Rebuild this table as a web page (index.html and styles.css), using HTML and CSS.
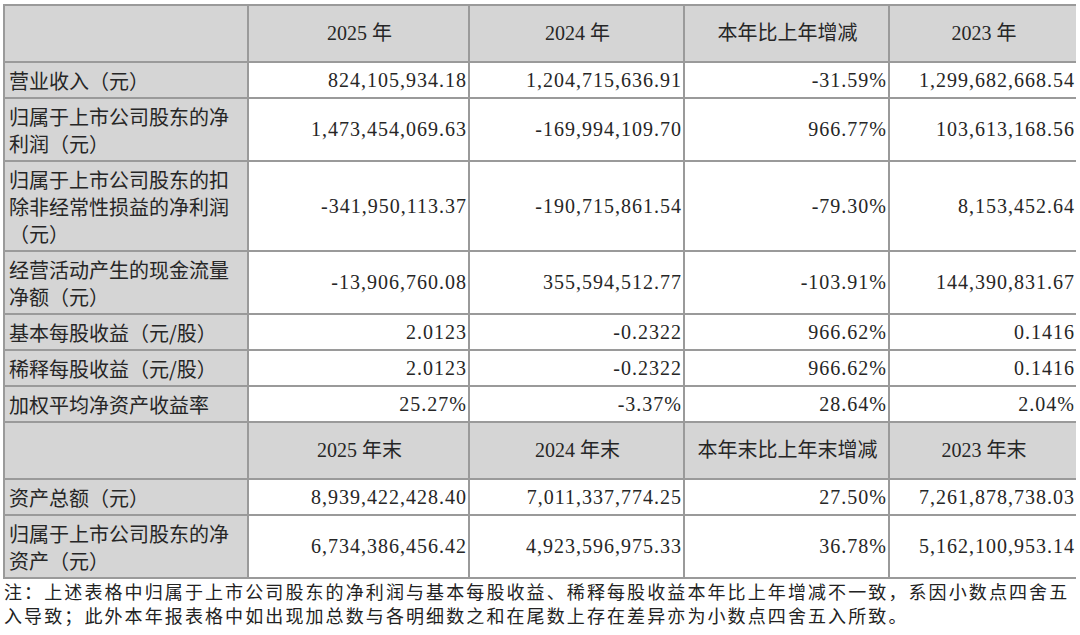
FILE: index.html
```html
<!DOCTYPE html>
<html lang="zh-CN">
<head>
<meta charset="utf-8">
<title>主要会计数据和财务指标</title>
<link rel="stylesheet" href="styles.css">
</head>
<body>
<table class="fin">
  <colgroup>
    <col class="c1"><col class="c2"><col class="c3"><col class="c4"><col class="c5">
  </colgroup>
  <tr class="head">
    <th></th><th>2025 年</th><th>2024 年</th><th>本年比上年增减</th><th>2023 年</th>
  </tr>
  <tr>
    <td class="label">营业收入（元）</td><td>824,105,934.18</td><td>1,204,715,636.91</td><td>-31.59%</td><td>1,299,682,668.54</td>
  </tr>
  <tr>
    <td class="label">归属于上市公司股东的净利润（元）</td><td>1,473,454,069.63</td><td>-169,994,109.70</td><td>966.77%</td><td>103,613,168.56</td>
  </tr>
  <tr>
    <td class="label">归属于上市公司股东的扣除非经常性损益的净利润（元）</td><td>-341,950,113.37</td><td>-190,715,861.54</td><td>-79.30%</td><td>8,153,452.64</td>
  </tr>
  <tr>
    <td class="label">经营活动产生的现金流量净额（元）</td><td>-13,906,760.08</td><td>355,594,512.77</td><td>-103.91%</td><td>144,390,831.67</td>
  </tr>
  <tr>
    <td class="label">基本每股收益（元/股）</td><td>2.0123</td><td>-0.2322</td><td>966.62%</td><td>0.1416</td>
  </tr>
  <tr>
    <td class="label">稀释每股收益（元/股）</td><td>2.0123</td><td>-0.2322</td><td>966.62%</td><td>0.1416</td>
  </tr>
  <tr>
    <td class="label">加权平均净资产收益率</td><td>25.27%</td><td>-3.37%</td><td>28.64%</td><td>2.04%</td>
  </tr>
  <tr class="head">
    <th></th><th>2025 年末</th><th>2024 年末</th><th>本年末比上年末增减</th><th>2023 年末</th>
  </tr>
  <tr>
    <td class="label">资产总额（元）</td><td>8,939,422,428.40</td><td>7,011,337,774.25</td><td>27.50%</td><td>7,261,878,738.03</td>
  </tr>
  <tr>
    <td class="label">归属于上市公司股东的净资产（元）</td><td>6,734,386,456.42</td><td>4,923,596,975.33</td><td>36.78%</td><td>5,162,100,953.14</td>
  </tr>
</table>
<p class="note">注：上述表格中归属于上市公司股东的净利润与基本每股收益、稀释每股收益本年比上年增减不一致，系因小数点四舍五入导致；此外本年报表格中如出现加总数与各明细数之和在尾数上存在差异亦为小数点四舍五入所致。</p>
</body>
</html>
```

FILE: styles.css
```css
html, body {
  background: #ffffff;
}
body {
  margin: 4px 4px 0 3px;
  color: #262626;
  font-family: "Liberation Serif", "Noto Sans CJK SC", serif;
}
.fin {
  width: 1073px;
  border-collapse: collapse;
  table-layout: fixed;
  border: 2px solid #9a9a9a;
}
.c1 { width: 244px; }
.c2 { width: 221px; }
.c3 { width: 215px; }
.c4 { width: 205px; }
.c5 { width: 188px; }
.fin th,
.fin td {
  border: 2px solid #9a9a9a;
  font-size: 20px;
  line-height: 27px;
  padding: 3.5px 2px 3.5px 4px;
  vertical-align: middle;
  font-weight: normal;
}
.fin td {
  text-align: right;
  letter-spacing: 1px;
  padding-right: 1px;
}
.fin td.label {
  text-align: left;
  letter-spacing: 0;
  background: #d5d5d5;
  font-family: "Noto Sans CJK SC", sans-serif;
}
.head th {
  background: #d5d5d5;
  text-align: center;
  padding-top: 14px;
  padding-bottom: 14px;
  font-family: "Liberation Serif", "Noto Sans CJK SC", serif;
}
.note {
  margin: 0;
  padding-left: 1px;
  width: 1073px;
  font-family: "Noto Sans CJK SC", sans-serif;
  font-size: 18px;
  line-height: 24px;
  letter-spacing: 2.1px;
  color: #222;
}
```
